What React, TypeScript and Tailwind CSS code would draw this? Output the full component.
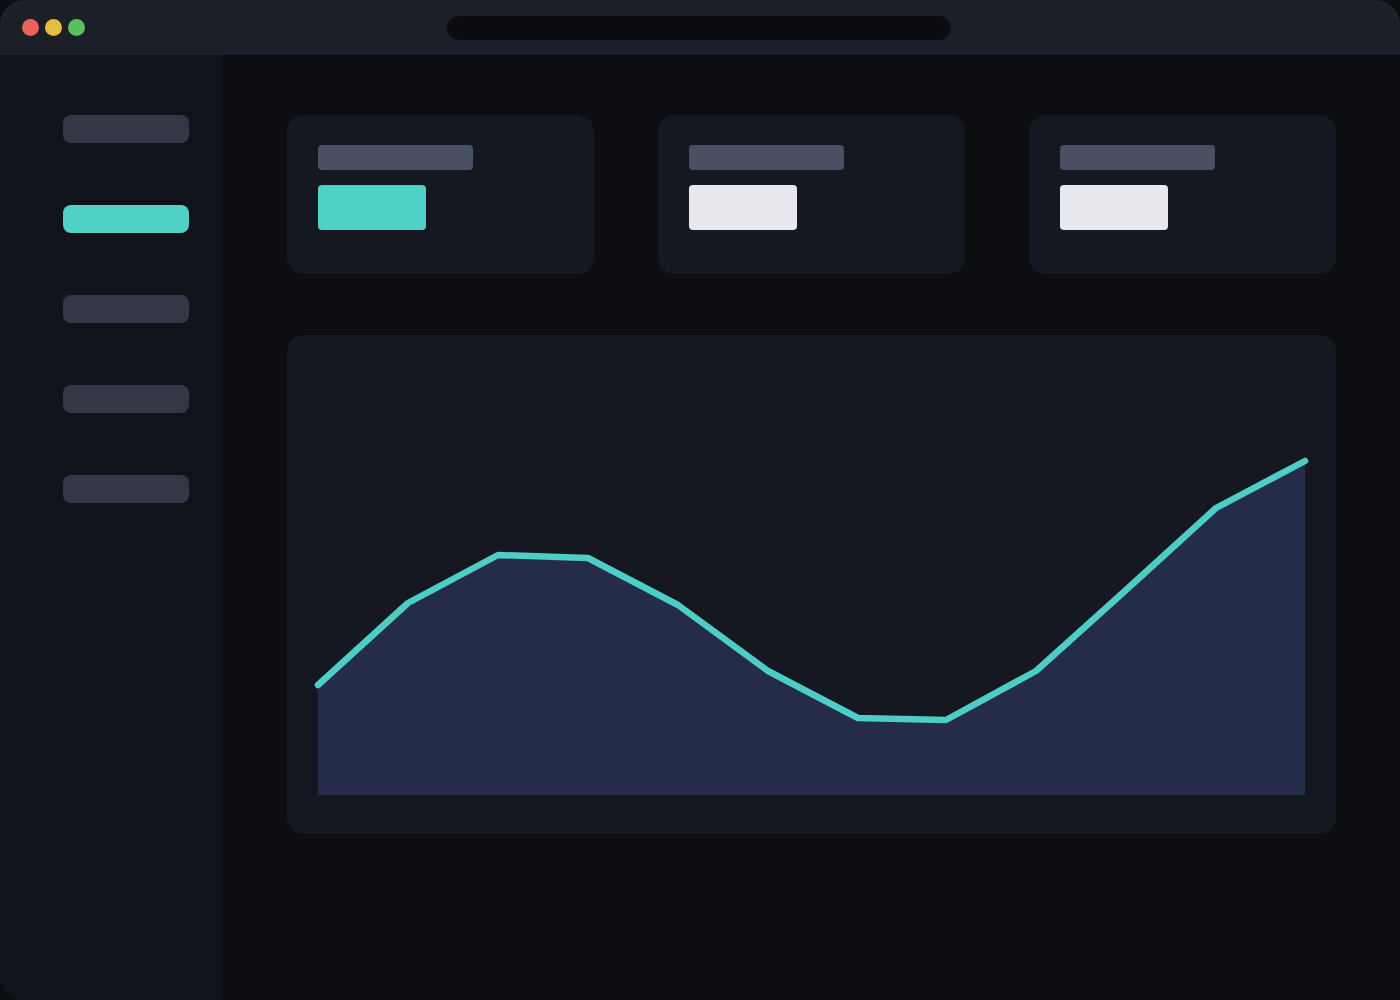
const navItems = [false, true, false, false, false];

const stats = [
  { accent: true },
  { accent: false },
  { accent: false },
];

const points: [number, number][] = [
  [0, 320],
  [90, 238],
  [180, 190],
  [270, 193],
  [360, 240],
  [450, 306],
  [540, 353],
  [628, 355],
  [718, 306],
  [808, 225],
  [898, 143],
  [987, 96],
];

function Chart() {
  const line = points.map(([x, y]) => `${x},${y}`).join(" ");
  const area = `0,430 ${line} 987,430`;
  return (
    <svg width="987" height="430" viewBox="0 0 987 430" className="block overflow-visible">
      <polygon points={area} fill="#252c49" />
      <polyline
        points={line}
        fill="none"
        stroke="#4ecdc4"
        strokeWidth="6.5"
        strokeLinecap="round"
        strokeLinejoin="round"
      />
    </svg>
  );
}

export default function App() {
  return (
    <div className="w-[1400px] h-[1000px] bg-[#0c0d10]">
      <div className="w-full h-full rounded-3xl overflow-hidden flex flex-col bg-[#0d0e12]">
        {/* title bar */}
        <div className="h-[55px] shrink-0 bg-[#1d1f28] flex items-center">
          <div className="flex gap-[6px] pl-[22px]">
            <span className="w-[17px] h-[17px] rounded-full bg-[#e8625a]" />
            <span className="w-[17px] h-[17px] rounded-full bg-[#e6bd3f]" />
            <span className="w-[17px] h-[17px] rounded-full bg-[#57c05f]" />
          </div>
          <div className="ml-[362px] w-[504px] h-[24px] rounded-full bg-[#0b0c10]" />
        </div>

        <div className="flex flex-1">
          {/* sidebar */}
          <aside className="w-[222px] shrink-0 bg-[#11131a] pt-[60px] pl-[63px] flex flex-col gap-[62px]">
            {navItems.map((active, i) => (
              <div
                key={i}
                className={`w-[126px] h-[28px] rounded-lg ${active ? "bg-[#4fd1c5]" : "bg-[#343846]"}`}
              />
            ))}
          </aside>

          {/* main */}
          <main className="flex-1 pt-[60px] pl-[65px] pr-[64px]">
            <div className="grid grid-cols-3 gap-[64px]">
              {stats.map((s, i) => (
                <div key={i} className="h-[159px] rounded-2xl bg-[#161821] pt-[30px] pl-[31px]">
                  <div className="w-[155px] h-[25px] rounded bg-[#4a5064]" />
                  <div
                    className={`mt-[15px] w-[108px] h-[45px] rounded ${s.accent ? "bg-[#4fd1c5]" : "bg-[#e8e9ee]"}`}
                  />
                </div>
              ))}
            </div>

            <div className="mt-[61px] h-[499px] rounded-2xl bg-[#161821] px-[31px] pt-[30px] pb-[39px]">
              <Chart />
            </div>
          </main>
        </div>
      </div>
    </div>
  );
}
